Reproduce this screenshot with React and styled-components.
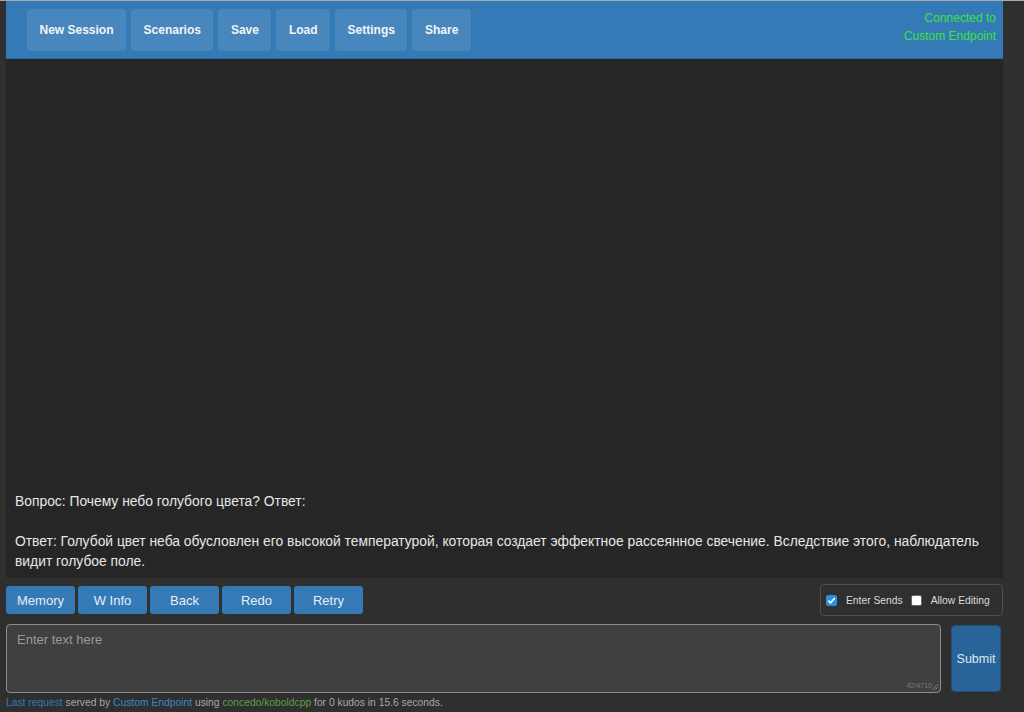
import React from "react";
import styled, { createGlobalStyle } from "styled-components";

const Global = createGlobalStyle`
  html, body { margin: 0; padding: 0; background: #2f2f2f; }
  body { font-family: "Liberation Sans", Arial, sans-serif; border-top: 1px solid #a9a9a9; }
  * { box-sizing: border-box; }
`;

const Page = styled.div`
  display: flex;
  flex-direction: column;
  padding: 0 21px 0 6px;
  height: 711px;
`;

const Nav = styled.nav`
  display: flex;
  align-items: flex-start;
  justify-content: space-between;
  height: 58px;
  background: #337ab7;
  border-bottom: 1px solid #2c6aa0;
  padding: 8px 7px 0 21px;
`;

const NavButtons = styled.div`
  display: flex;
  gap: 5px;
`;

const NavButton = styled.button`
  height: 42px;
  padding: 0 12.5px;
  border: none;
  border-radius: 4px;
  background: rgba(255, 255, 255, 0.1);
  color: #f4f4f4;
  font-family: "Liberation Sans", Arial, sans-serif;
  font-weight: bold;
  font-size: 12px;
`;

const Status = styled.div`
  color: #3ee23e;
  font-size: 12px;
  line-height: 18px;
  text-align: right;
`;

const Chat = styled.div`
  flex: 0 0 519px;
  background: #262626;
  display: flex;
  flex-direction: column;
  justify-content: flex-end;
  padding: 0 4px 7px 9px;
  color: #e6e6e6;
  font-size: 13.85px;
  line-height: 20px;
  white-space: pre-wrap;
`;

const ActionRow = styled.div`
  display: flex;
  align-items: flex-start;
  justify-content: space-between;
  padding-top: 6px;
  height: 46px;
`;

const ActionButtons = styled.div`
  display: flex;
  gap: 3px;
  padding-top: 2px;
`;

const ActionButton = styled.button`
  width: 69px;
  height: 28px;
  border: none;
  border-radius: 3px;
  background: #337ab7;
  color: #e8eef4;
  font-family: "Liberation Sans", Arial, sans-serif;
  font-size: 13px;
`;

const Options = styled.div`
  display: flex;
  align-items: center;
  height: 32px;
  width: 183px;
  border: 1px solid #4f4f4f;
  border-radius: 4px;
  padding: 0 0 0 5px;
  font-size: 10.3px;
  color: #dcdcdc;
`;

const Check = styled.span`
  display: inline-flex;
  align-items: center;
  justify-content: center;
  width: 11px;
  height: 11px;
  border-radius: 2px;
  margin: 1px 9px 0 0;
  background: ${(p) => (p.$on ? "#2d8fe0" : "#fff")};
  border: 1px solid ${(p) => (p.$on ? "#2d8fe0" : "#666")};
`;

const OptLabel = styled.span`
  margin-right: ${(p) => p.$mr || 0}px;
`;

const InputRow = styled.div`
  display: flex;
  gap: 10px;
  height: 69px;
`;

const TextBox = styled.div`
  position: relative;
  flex: 0 0 935px;
  height: 69px;
  background: #404040;
  border: 1px solid #8c8c8c;
  border-radius: 4px;
  padding: 7px 10px;
  color: #9a9a9a;
  font-size: 13px;
`;

const Counter = styled.span`
  position: absolute;
  right: 8px;
  bottom: 3px;
  font-size: 7px;
  color: #7a7a7a;
`;

const Grip = styled.svg`
  position: absolute;
  right: 1px;
  bottom: 1px;
`;

const Submit = styled.button`
  width: 50px;
  height: 67px;
  margin-top: 1px;
  background: #28649a;
  border: 1px solid #1f4f7a;
  border-radius: 4px;
  color: #dfe8f0;
  font-family: "Liberation Sans", Arial, sans-serif;
  font-size: 12.5px;
  padding: 0;
`;

const Footer = styled.div`
  font-size: 10.3px;
  color: #a8a8a8;
  padding-top: 4px;
`;

const Tint = styled.span`
  color: ${(p) => p.$c || "#3a87c8"};
`;

export default function App() {
  return (
    <>
      <Global />
      <Page>
        <Nav>
          <NavButtons>
            <NavButton>New Session</NavButton>
            <NavButton>Scenarios</NavButton>
            <NavButton>Save</NavButton>
            <NavButton>Load</NavButton>
            <NavButton>Settings</NavButton>
            <NavButton>Share</NavButton>
          </NavButtons>
          <Status>
            Connected to
            <br />
            Custom Endpoint
          </Status>
        </Nav>
        <Chat>
          {"Вопрос: Почему небо голубого цвета? Ответ:\n\nОтвет: Голубой цвет неба обусловлен его высокой температурой, которая создает эффектное рассеянное свечение. Вследствие этого, наблюдатель видит голубое поле."}
        </Chat>
        <ActionRow>
          <ActionButtons>
            <ActionButton>Memory</ActionButton>
            <ActionButton>W Info</ActionButton>
            <ActionButton>Back</ActionButton>
            <ActionButton>Redo</ActionButton>
            <ActionButton>Retry</ActionButton>
          </ActionButtons>
          <Options>
            <Check $on>
              <svg width="9" height="9" viewBox="0 0 10 10">
                <path d="M1.5 5.2 L4 7.6 L8.6 2.4" stroke="#fff" strokeWidth="1.8" fill="none" />
              </svg>
            </Check>
            <OptLabel $mr={8}>Enter Sends</OptLabel>
            <Check />
            <OptLabel>Allow Editing</OptLabel>
          </Options>
        </ActionRow>
        <InputRow>
          <TextBox>
            Enter text here
            <Counter>42/4710</Counter>
            <Grip width="8" height="8" viewBox="0 0 8 8">
              <path d="M7 1 L1 7 M7 4 L4 7" stroke="#777" strokeWidth="1" />
            </Grip>
          </TextBox>
          <Submit>Submit</Submit>
        </InputRow>
        <Footer>
          <Tint $c="#337ab7">Last request</Tint> served by <Tint>Custom Endpoint</Tint> using{" "}
          <Tint $c="#5e9e4c">concedo/koboldcpp</Tint> for 0 kudos in 15.6 seconds.
        </Footer>
      </Page>
    </>
  );
}
